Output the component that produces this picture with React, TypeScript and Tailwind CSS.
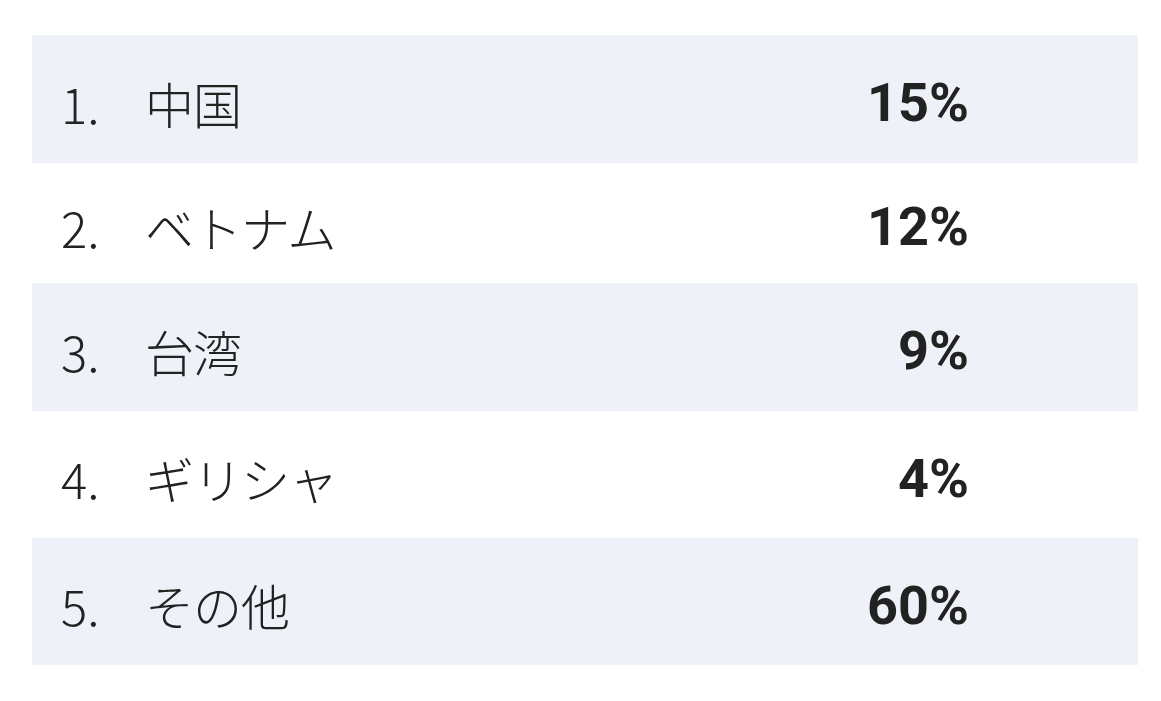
import React from "react";

const rows = [
  { n: "1.", name: "中国", pct: "15%", h: "h-[128px]", bg: "bg-[#eef1f8]" },
  { n: "2.", name: "ベトナム", pct: "12%", h: "h-[120px]", bg: "bg-white" },
  { n: "3.", name: "台湾", pct: "9%", h: "h-[128px]", bg: "bg-[#eef1f8]" },
  { n: "4.", name: "ギリシャ", pct: "4%", h: "h-[127px]", bg: "bg-white" },
  { n: "5.", name: "その他", pct: "60%", h: "h-[127px]", bg: "bg-[#eef1f8]" },
];

export default function App() {
  return (
    <div
      className="w-[1161px] h-[701px] bg-white pt-[35px] px-[32px] text-[#222222]"
      style={{ fontFamily: '"Noto Sans CJK JP", "Noto Sans", sans-serif' }}
    >
      {rows.map((r, i) => (
        <div
          key={i}
          className={`flex items-center w-[1106px] pl-[29px] pr-[169px] pt-[6px] ${r.h} ${r.bg}`}
        >
          <div className="w-[84px] text-[49px] font-light leading-none">{r.n}</div>
          <div className="flex-1 text-[49px] font-light leading-none tracking-[-1px]">{r.name}</div>
          <div
            className="text-[54px] font-bold leading-none text-right pt-[2px]"
            style={{ fontFamily: 'Roboto, "Noto Sans", sans-serif' }}
          >
            {r.pct}
          </div>
        </div>
      ))}
    </div>
  );
}
